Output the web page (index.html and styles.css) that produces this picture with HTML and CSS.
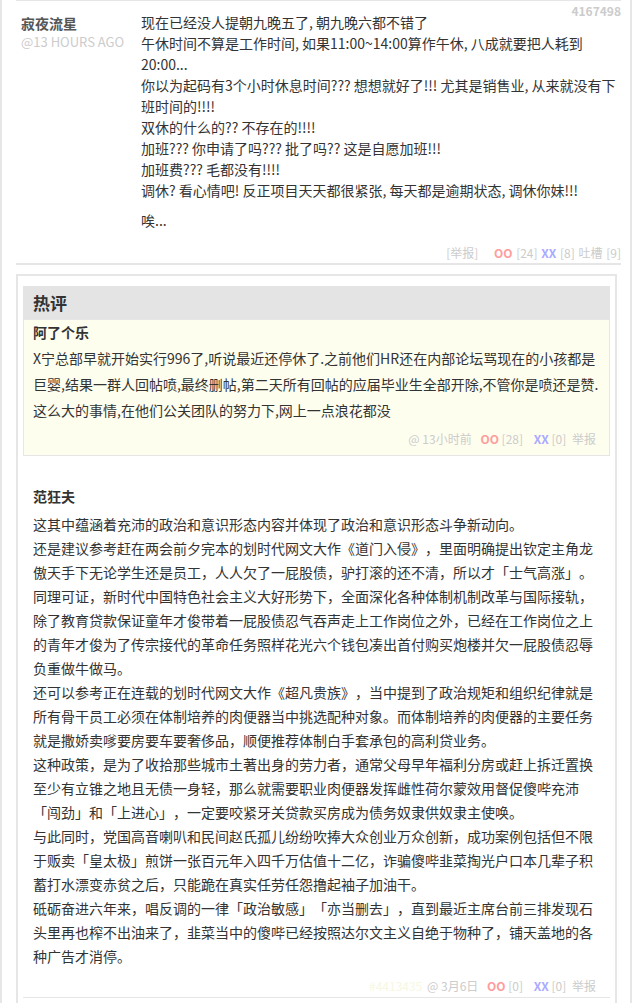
FILE: index.html
```html
<!DOCTYPE html>
<html lang="zh-CN">
<head>
<meta charset="utf-8">
<title>吐槽</title>
<link rel="stylesheet" href="styles.css">
</head>
<body>
<div class="page">
  <ol class="comments">
    <li class="comment">
      <div class="author">
        <strong class="name">寂夜流星</strong>
        <small class="time">@13 hours ago</small>
      </div>
      <div class="body">
        <span class="cid">4167498</span>
        <div class="text">
          <p>现在已经没人提朝九晚五了, 朝九晚六都不错了<br>午休时间不算是工作时间, 如果11:00~14:00算作午休, 八成就要把人耗到20:00...<br>你以为起码有3个小时休息时间??? 想想就好了!!! 尤其是销售业, 从来就没有下班时间的!!!!<br>双休的什么的?? 不存在的!!!!<br>加班??? 你申请了吗??? 批了吗?? 这是自愿加班!!!<br>加班费??? 毛都没有!!!!<br>调休? 看心情吧! 反正项目天天都很紧张, 每天都是逾期状态, 调休你妹!!!</p>
          <p class="last">唉...</p>
        </div>
        <div class="vote">
          <span class="report">[举报]</span>
          <span class="oo">OO</span> <span class="num">[24]</span>
          <span class="xx">XX</span> <span class="num">[8]</span>
          <span class="num">吐槽 [9]</span>
        </div>
      </div>
    </li>
  </ol>

  <div class="hot">
    <h3 class="hot-title">热评</h3>
    <div class="hot-item hot-item--top">
      <strong class="hot-name">阿了个乐</strong>
      <div class="hot-text">X宁总部早就开始实行996了,听说最近还停休了.之前他们HR还在内部论坛骂现在的小孩都是巨婴,结果一群人回帖喷,最终删帖,第二天所有回帖的应届毕业生全部开除,不管你是喷还是赞.这么大的事情,在他们公关团队的努力下,网上一点浪花都没</div>
      <div class="hot-vote">
        <span class="at">@ 13小时前</span>
        <span class="oo">OO</span> <span class="num">[28]</span>
        <span class="xx">XX</span> <span class="num">[0]</span>
        <span class="num rep">举报</span>
      </div>
    </div>
    <div class="hot-item hot-item--plain">
      <strong class="hot-name">范狂夫</strong>
      <div class="hot-text hot-text--long">
        <p>这其中蕴涵着充沛的政治和意识形态内容并体现了政治和意识形态斗争新动向。</p>
        <p>还是建议参考赶在两会前夕完本的划时代网文大作《道门入侵》，里面明确提出钦定主角龙傲天手下无论学生还是员工，人人欠了一屁股债，驴打滚的还不清，所以才「士气高涨」。</p>
        <p>同理可证，新时代中国特色社会主义大好形势下，全面深化各种体制机制改革与国际接轨，除了教育贷款保证童年才俊带着一屁股债忍气吞声走上工作岗位之外，已经在工作岗位之上的青年才俊为了传宗接代的革命任务照样花光六个钱包凑出首付购买炮楼并欠一屁股债忍辱负重做牛做马。</p>
        <p>还可以参考正在连载的划时代网文大作《超凡贵族》，当中提到了政治规矩和组织纪律就是所有骨干员工必须在体制培养的肉便器当中挑选配种对象。而体制培养的肉便器的主要任务就是撒娇卖嗲要房要车要奢侈品，顺便推荐体制白手套承包的高利贷业务。</p>
        <p>这种政策，是为了收拾那些城市土著出身的劳力者，通常父母早年福利分房或赶上拆迁置换至少有立锥之地且无债一身轻，那么就需要职业肉便器发挥雌性荷尔蒙效用督促傻哔充沛「闯劲」和「上进心」，一定要咬紧牙关贷款买房成为债务奴隶供奴隶主使唤。</p>
        <p>与此同时，党国高音喇叭和民间赵氏孤儿纷纷吹捧大众创业万众创新，成功案例包括但不限于贩卖「皇太极」煎饼一张百元年入四千万估值十二亿，诈骗傻哔韭菜掏光户口本几辈子积蓄打水漂变赤贫之后，只能跪在真实任劳任怨撸起袖子加油干。</p>
        <p>砥砺奋进六年来，唱反调的一律「政治敏感」「亦当删去」，直到最近主席台前三排发现石头里再也榨不出油来了，韭菜当中的傻哔已经按照达尔文主义自绝于物种了，铺天盖地的各种广告才消停。</p>
      </div>
      <div class="hot-vote">
        <span class="hid">#4413435</span>
        <span class="at">@ 3月6日</span>
        <span class="oo">OO</span> <span class="num">[0]</span>
        <span class="xx">XX</span> <span class="num">[0]</span>
        <span class="num rep">举报</span>
      </div>
    </div>
  </div>
</div>
</body>
</html>
```

FILE: styles.css
```css
* {
  box-sizing: border-box;
}

html, body {
  margin: 0;
  padding: 0;
  background: #fff;
}

body {
  font-family: "Noto Sans CJK SC", "Noto Sans", sans-serif;
  color: #333;
  font-size: 14px;
  text-spacing-trim: space-all;
}

.page {
  width: 632px;
  height: 1003px;
  overflow: hidden;
  border-left: 2px solid #e6e6e6;
  border-right: 2px solid #e6e6e6;
}

.comments {
  list-style: none;
  margin: 0 0 0 14px;
  padding: 0;
  width: 605px;
}

.comment {
  position: relative;
  display: flex;
  border-top: 1px solid #e6e6e6;
  border-bottom: 2px solid #e6e6e6;
}

.author {
  width: 125px;
  flex: none;
  padding: 12px 0 0 5px;
  display: flex;
  flex-direction: column;
}

.name {
  font-size: 14px;
  line-height: 20px;
  font-weight: bold;
  color: #555;
}

.time {
  font-size: 13px;
  line-height: 18px;
  color: #ccc;
  text-transform: uppercase;
}

.body {
  width: 480px;
  padding-top: 11px;
}

.cid {
  position: absolute;
  top: 2px;
  right: 0;
  font-size: 12px;
  line-height: 16px;
  font-weight: bold;
  color: #ccc;
}

.text {
  width: 482px;
}

.text p {
  margin: 0;
  font-size: 14px;
  line-height: 21px;
  color: #333;
}

.text p.last {
  margin-top: 9px;
}

.vote {
  margin-top: 12px;
  text-align: right;
  font-size: 12px;
  line-height: 20px;
  color: #ccc;
  word-spacing: 1px;
}

.report {
  margin-right: 12px;
}

.oo {
  color: #ff9d9d;
  font-weight: bold;
}

.xx {
  color: #aaaaff;
  font-weight: bold;
}

.num {
  color: #ccc;
}

.hot {
  margin: 9px 0 0 14px;
  width: 601px;
  border: 2px solid #e6e6e6;
  border-bottom: 0;
  padding: 10px 5px 0 5px;
  height: 800px;
}

.hot-title {
  margin: 0;
  height: 33px;
  line-height: 33px;
  padding-left: 10px;
  background: #e4e4e4;
  font-size: 17px;
  font-weight: bold;
  color: #333;
}

.hot-item {
  display: flex;
  flex-direction: column;
}

.hot-item--top {
  background: #fefeef;
  border: 1px solid #e6e6e6;
  padding: 2px 6px 6px 9px;
}

.hot-item--plain {
  border-bottom: 1px solid #e6e6e6;
  padding: 30px 7px 1px 10px;
}

.hot-name {
  font-size: 14px;
  line-height: 20px;
  font-weight: bold;
  color: #333;
}

.hot-text {
  margin-top: 3px;
  font-size: 14px;
  line-height: 26px;
  color: #333;
}

.hot-text--long {
  margin-top: 6px;
  line-height: 24px;
}

.hot-text--long p {
  margin: 0;
}

.hot-item--top .hot-vote {
  margin-top: 6px;
}

.hot-vote {
  margin-top: 8px;
  margin-right: 7px;
  text-align: right;
  font-size: 12px;
  line-height: 20px;
  color: #ccc;
}

.hot-vote .at {
  margin-right: 6px;
}

.hot-vote .xx {
  margin-left: 8px;
}

.hot-vote .rep {
  margin-left: 3px;
}

.hid {
  color: #f7f7e2;
  margin-right: 2px;
}
```
